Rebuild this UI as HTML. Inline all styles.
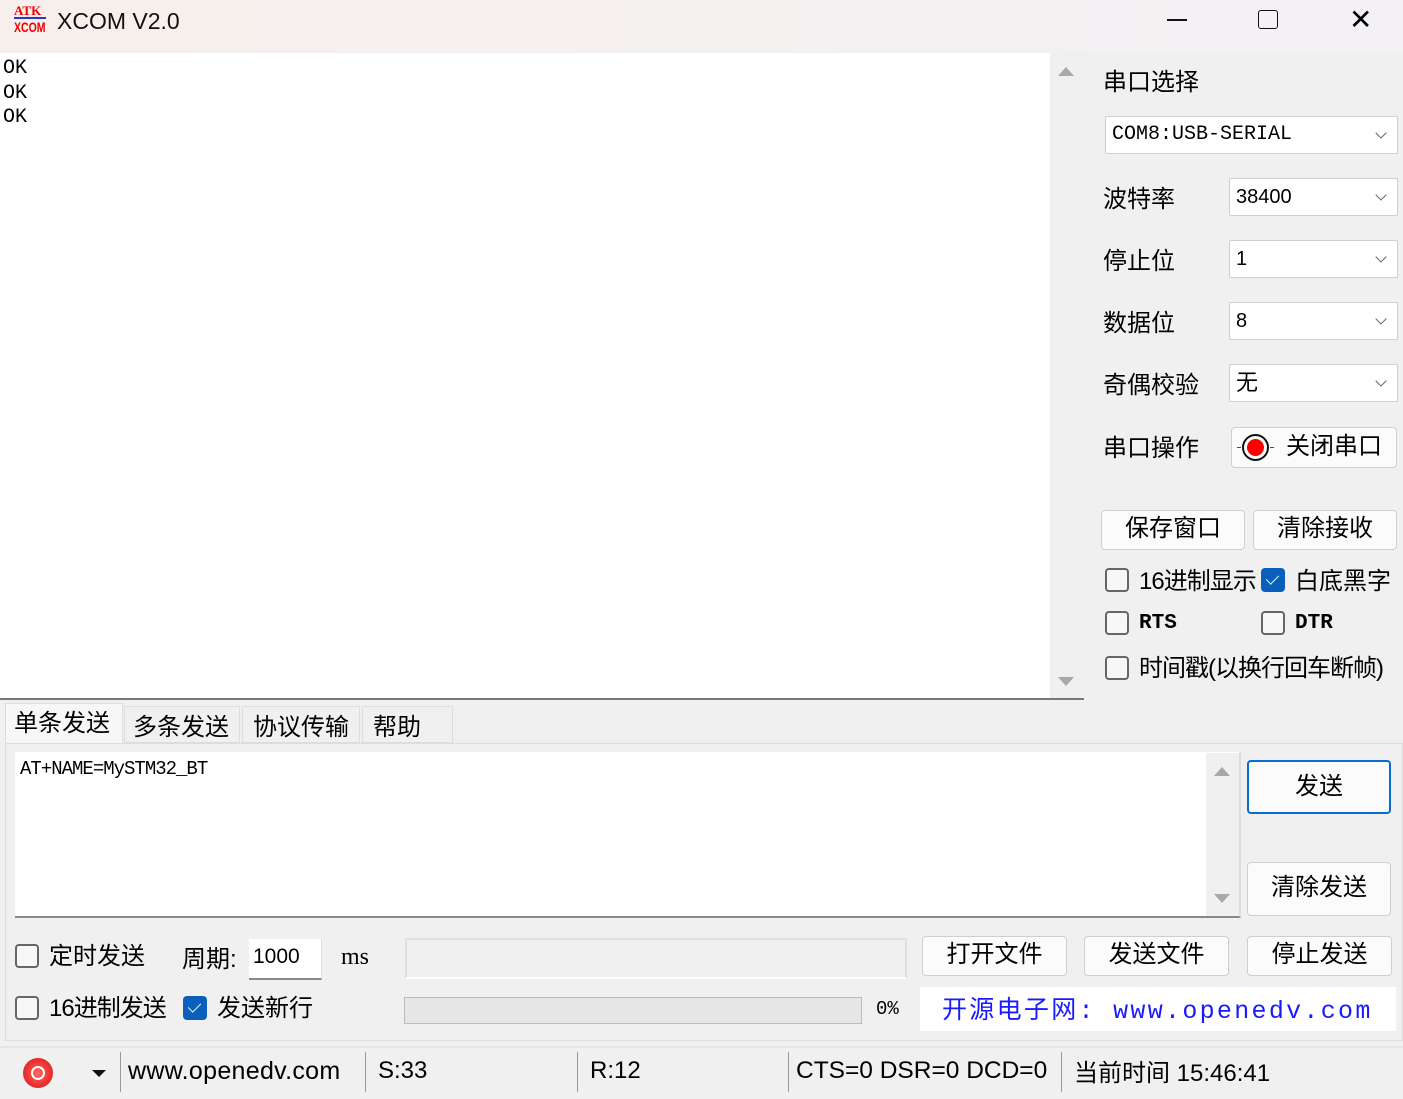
<!DOCTYPE html>
<html><head><meta charset="utf-8"><style>
*{box-sizing:border-box;margin:0;padding:0}
body{width:1403px;height:1099px;background:#f0f0f0;position:relative;overflow:hidden;font-family:"Liberation Sans","Noto Sans CJK SC",sans-serif;color:#000}
.a{position:absolute}
.cj{font-family:"Liberation Sans","WenQuanYi Zen Hei","Noto Sans CJK SC",sans-serif}
.mono{font-family:"Liberation Mono","WenQuanYi Zen Hei",monospace}
.lbl{font-size:24px;white-space:nowrap;margin-top:-4px}
.combo{position:absolute;background:#fff;border:1px solid #cfcfcf;border-radius:2px;height:38px;font-size:20px;line-height:36px;padding-left:6px}
.combo::after{content:"";position:absolute;right:12px;top:12px;width:7px;height:7px;border-right:1.5px solid #666;border-bottom:1.5px solid #666;transform:rotate(45deg)}
.btn{position:absolute;background:#fbfbfb;border:1px solid #cfcfcf;border-radius:4px;font-size:24px;text-align:center;white-space:nowrap}
.cb{position:absolute;width:24px;height:24px;border:2px solid #666;border-radius:4px;background:#f7f7f7}
.cbc{position:absolute;width:24px;height:24px;border-radius:4px;background:#0a5fbd}
.cbc::after{content:"";position:absolute;left:8px;top:4px;width:6px;height:11px;border-right:1.5px solid #cfe;border-bottom:1.5px solid #cfe;transform:rotate(45deg)}
</style></head><body>
<div class="a" style="left:0;top:0;width:1403px;height:52px;background:linear-gradient(90deg,#f7efeb,#f3f1f5)"></div>
<div class="a" style="left:14px;top:4px;font:bold 13px 'Liberation Serif',serif;color:#e00;line-height:13px">ATK</div>
<div class="a" style="left:14px;top:17px;width:32px;height:2px;background:#33c"></div>
<div class="a" style="left:14px;top:19px;font:bold 14px 'Liberation Sans',sans-serif;color:#e00;transform:scaleX(.75);transform-origin:left">XCOM</div>
<div class="a" style="left:57px;top:8px;font-size:23px;color:#111">XCOM V2.0</div>
<div class="a" style="left:1167px;top:19px;width:20px;height:1.5px;background:#111"></div>
<div class="a" style="left:1258px;top:10px;width:20px;height:19px;border:1.5px solid #111;border-radius:3px"></div>
<div class="a" style="left:1349px;top:8px;font-size:28px;line-height:24px;font-weight:300">✕</div>
<div class="a" style="left:0;top:53px;width:1050px;height:645px;background:#fff"></div>
<div class="a" style="left:1050px;top:53px;width:33px;height:645px;background:#f0f0f0;border-left:1px solid #eee"></div>
<div class="a" style="left:1058px;top:67px;border:8px solid transparent;border-bottom:9px solid #a8a8a8;border-top:0"></div>
<div class="a" style="left:1058px;top:677px;border:8px solid transparent;border-top:9px solid #a8a8a8;border-bottom:0"></div>
<div class="a" style="left:0;top:698px;width:1084px;height:2px;background:#777"></div>
<div class="a mono" style="left:3px;top:57px;font-size:20px;line-height:24.5px">OK<br>OK<br>OK</div>
<div class="a lbl cj" style="left:1103px;top:66px">串口选择</div>
<div class="combo mono" style="left:1105px;top:116px;width:293px">COM8:USB-SERIAL</div>
<div class="a lbl cj" style="left:1103px;top:183px">波特率</div>
<div class="combo" style="left:1229px;top:178px;width:169px">38400</div>
<div class="a lbl cj" style="left:1103px;top:245px">停止位</div>
<div class="combo" style="left:1229px;top:240px;width:169px">1</div>
<div class="a lbl cj" style="left:1103px;top:307px">数据位</div>
<div class="combo" style="left:1229px;top:302px;width:169px">8</div>
<div class="a lbl cj" style="left:1103px;top:369px">奇偶校验</div>
<div class="combo cj" style="left:1229px;top:364px;width:169px;font-size:22px">无</div>
<div class="a lbl cj" style="left:1103px;top:432px">串口操作</div>
<div class="btn cj" style="left:1231px;top:427px;width:166px;height:41px;line-height:37px;padding-left:40px">关闭串口</div>
<div class="a" style="left:1242px;top:434px;width:27px;height:27px;border-radius:50%;border:2px solid #111;background:#fff"></div>
<div class="a" style="left:1247px;top:439px;width:17px;height:17px;border-radius:50%;background:#f00"></div>
<div class="a" style="left:1237px;top:447px;width:37px;height:1px;border-left:4px solid #f00;border-right:4px solid #f00"></div>
<div class="btn cj" style="left:1101px;top:510px;width:144px;height:40px;line-height:36px">保存窗口</div>
<div class="btn cj" style="left:1253px;top:510px;width:144px;height:40px;line-height:36px">清除接收</div>
<div class="cb" style="left:1105px;top:568px"></div>
<div class="a lbl cj" style="left:1139px;top:565px;letter-spacing:-1px">16进制显示</div>
<div class="cbc" style="left:1261px;top:568px"></div>
<div class="a lbl cj" style="left:1295px;top:565px">白底黑字</div>
<div class="cb" style="left:1105px;top:611px"></div>
<div class="a mono" style="left:1139px;top:612px;font-size:21px;font-weight:bold">RTS</div>
<div class="cb" style="left:1261px;top:611px"></div>
<div class="a mono" style="left:1295px;top:612px;font-size:21px;font-weight:bold">DTR</div>
<div class="cb" style="left:1105px;top:656px"></div>
<div class="a lbl cj" style="left:1139px;top:652px;letter-spacing:-1px">时间戳(以换行回车断帧)</div>
<div class="a" style="left:5px;top:703px;width:118px;height:42px;background:#f7f7f7;border:1px solid #ddd;border-bottom:none"></div>
<div class="a lbl cj" style="left:14px;top:707px">单条发送</div>
<div class="a" style="left:124px;top:706px;width:116px;height:37px;border:1px solid #ddd"></div>
<div class="a lbl cj" style="left:133px;top:711px">多条发送</div>
<div class="a" style="left:242px;top:706px;width:118px;height:37px;border:1px solid #ddd"></div>
<div class="a lbl cj" style="left:253px;top:711px">协议传输</div>
<div class="a" style="left:362px;top:706px;width:91px;height:37px;border:1px solid #ddd"></div>
<div class="a lbl cj" style="left:373px;top:711px">帮助</div>
<div class="a" style="left:5px;top:743px;width:1398px;height:298px;border:1px solid #ddd;background:#f0f0f0"></div>
<div class="a" style="left:15px;top:752px;width:1226px;height:166px;background:#fff;border-bottom:2px solid #888;border-right:2px solid #ddd"></div>
<div class="a" style="left:1206px;top:753px;width:33px;height:163px;background:#f0f0f0"></div>
<div class="a" style="left:1214px;top:767px;border:8px solid transparent;border-bottom:9px solid #a8a8a8;border-top:0"></div>
<div class="a" style="left:1214px;top:894px;border:8px solid transparent;border-top:9px solid #a8a8a8;border-bottom:0"></div>
<div class="a mono" style="left:20px;top:758px;font-size:19px;letter-spacing:-1px">AT+NAME=MySTM32_BT</div>
<div class="btn cj" style="left:1247px;top:760px;width:144px;height:54px;line-height:50px;border:2px solid #0a6cd0">发送</div>
<div class="btn cj" style="left:1247px;top:862px;width:144px;height:54px;line-height:50px">清除发送</div>
<div class="cb" style="left:15px;top:944px"></div>
<div class="a lbl cj" style="left:49px;top:940px">定时发送</div>
<div class="a lbl cj" style="left:182px;top:943px">周期:</div>
<div class="a" style="left:249px;top:939px;width:73px;height:41px;background:#fff;border-bottom:2px solid #888;border-right:1px solid #ddd;font-size:21px;padding:6px 0 0 4px">1000</div>
<div class="a" style="left:341px;top:944px;font-size:24px;font-family:'Liberation Serif',serif">ms</div>
<div class="a" style="left:405px;top:938px;width:502px;height:41px;background:#f0f0f0;border:2px solid #e0e0e0;border-bottom-color:#fff"></div>
<div class="btn cj" style="left:922px;top:936px;width:145px;height:40px;line-height:36px">打开文件</div>
<div class="btn cj" style="left:1084px;top:936px;width:145px;height:40px;line-height:36px">发送文件</div>
<div class="btn cj" style="left:1247px;top:936px;width:145px;height:40px;line-height:36px">停止发送</div>
<div class="cb" style="left:15px;top:996px"></div>
<div class="a lbl cj" style="left:49px;top:992px;letter-spacing:-1px">16进制发送</div>
<div class="cbc" style="left:183px;top:996px"></div>
<div class="a lbl cj" style="left:217px;top:992px">发送新行</div>
<div class="a" style="left:404px;top:997px;width:458px;height:27px;background:#e6e6e6;border:1px solid #bcbcbc"></div>
<div class="a mono" style="left:876px;top:998px;font-size:19px">0%</div>
<div class="a" style="left:920px;top:987px;width:476px;height:44px;background:#fff"></div>
<div class="a mono" style="left:942px;top:990px;font-size:25px;color:#1a1aff;letter-spacing:2.3px;white-space:nowrap">开源电子网: www.openedv.com</div>
<div class="a" style="left:0;top:1046px;width:1403px;height:53px;background:#f0f0f0;border-top:2px solid #e4e4e4"></div>
<div class="a" style="left:23px;top:1058px;width:30px;height:30px;border-radius:50%;background:radial-gradient(circle,#f66 0,#e33 55%,#b21 100%)"></div>
<div class="a" style="left:31px;top:1066px;width:14px;height:14px;border-radius:50%;border:2.5px solid #fff"></div>
<div class="a" style="left:92px;top:1070px;border:7px solid transparent;border-top:7px solid #111;border-bottom:0"></div>
<div class="a" style="left:120px;top:1052px;width:1px;height:40px;background:#999"></div>
<div class="a" style="left:128px;top:1057px;font-size:25px;letter-spacing:.3px">www.openedv.com</div>
<div class="a" style="left:365px;top:1052px;width:1px;height:40px;background:#999"></div>
<div class="a" style="left:378px;top:1057px;font-size:24px">S:33</div>
<div class="a" style="left:577px;top:1052px;width:1px;height:40px;background:#999"></div>
<div class="a" style="left:590px;top:1057px;font-size:24px">R:12</div>
<div class="a" style="left:788px;top:1052px;width:1px;height:40px;background:#999"></div>
<div class="a" style="left:796px;top:1057px;font-size:24.5px;white-space:nowrap">CTS=0 DSR=0 DCD=0</div>
<div class="a" style="left:1061px;top:1052px;width:1px;height:40px;background:#999"></div>
<div class="a cj" style="left:1074px;top:1053px;font-size:24px;white-space:nowrap">当前时间 15:46:41</div>
</body></html>
